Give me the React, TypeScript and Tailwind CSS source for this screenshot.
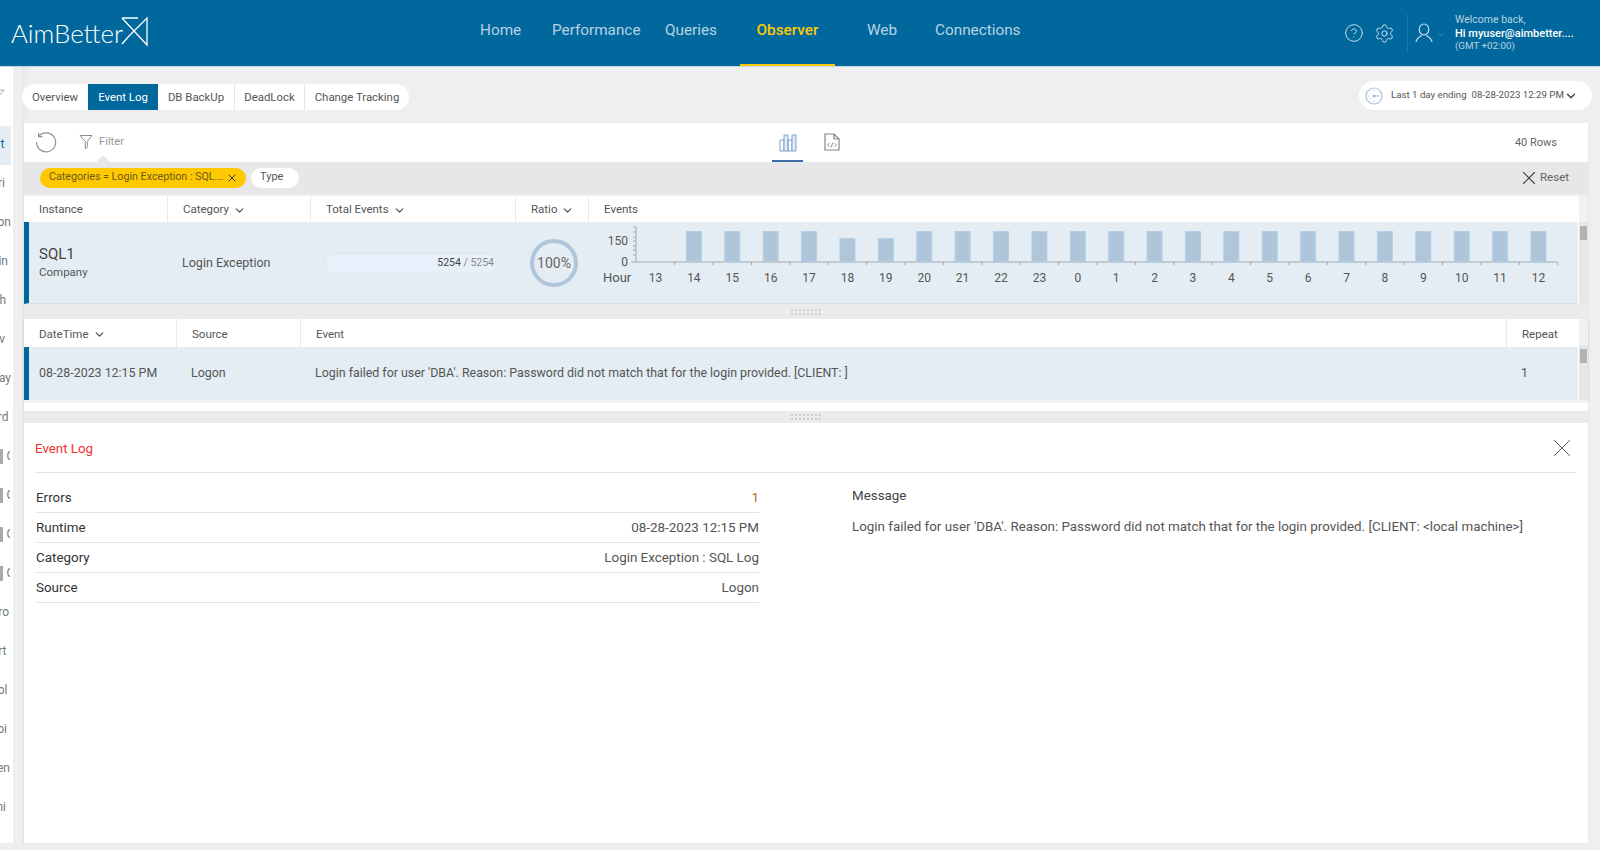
import React from "react";
import { ChevronDown, X, CircleHelp, Settings } from "lucide-react";

const navItems = [
  { label: "Home", cls: "ml-[480px] w-[41px]" },
  { label: "Performance", cls: "ml-[31px] w-[88px]" },
  { label: "Queries", cls: "ml-[25px] w-[52px]" },
];

const sideLabels = [
  { t: "t", c: "pr-[6.6px] bg-[#e4edf3] text-[#01689d]" },
  { t: "ri", c: "pr-[6px]" },
  { t: "on", c: "pr-0" },
  { t: "in", c: "pr-[3px]" },
  { t: "th", c: "pr-[5px]" },
  { t: "v", c: "pr-[6px]" },
  { t: "ay", c: "pr-0" },
  { t: "rd", c: "pr-[2.5px]" },
];
const sideLabels2 = [
  { t: "ro", c: "pr-[2px]" },
  { t: "rt", c: "pr-[4.5px]" },
  { t: "ol", c: "pr-[3.5px]" },
  { t: "oi", c: "pr-[4px]" },
  { t: "en", c: "pr-[1px]" },
  { t: "ni", c: "pr-[5px]" },
];
const hours = [13, 14, 15, 16, 17, 18, 19, 20, 21, 22, 23, 0, 1, 2, 3, 4, 5, 6, 7, 8, 9, 10, 11, 12];

function Logo() {
  return (
    <div className="flex items-center ml-[11px] w-[137px] absolute left-0 top-0 h-[66px]">
      <span className="text-[25.8px] leading-none font-light text-white font-['Lato',sans-serif] pt-[1px]">AimBetter</span>
      <svg width="30" height="32" viewBox="0 0 30 32" className="absolute left-[110px] top-[15px]" fill="none" stroke="#ffffff" strokeWidth="1.3">
        <path d="M1 3H17M1 3L26 30V3L8 21L1 29" />
      </svg>
    </div>
  );
}

function HeadCell({ label, w, sort, pt = "pt-[2px]", last }: { label: string; w: string; sort?: boolean; pt?: string; last?: boolean }) {
  return (
    <div className={`${w} pl-[15px] ${pt} ${last ? "" : "border-r border-[#e9e9e9]"} h-full flex items-center gap-[4px] text-[11.5px] text-[#555555] shrink-0`}>
      <span>{label}</span>
      {sort && <ChevronDown size={13} strokeWidth={2.4} className="text-[#555555]" />}
    </div>
  );
}

function Track() {
  return (
    <div className="w-[10px] shrink-0 bg-[#e7e7e7] border-l border-white self-stretch">
      <div className="h-[26px] bg-[#f1f1f1]" />
      <div className="h-[14px] mt-[4px] mx-[1px] bg-[#b2b2b2]" />
    </div>
  );
}

function Grip() {
  return (
    <svg width="32" height="6" viewBox="0 0 32 6" fill="#cdcdcd">
      {[0, 4, 8, 12, 16, 20, 24, 28].map((x) => (
        <g key={x}>
          <rect x={x + 1} y="0" width="2" height="2" />
          <rect x={x + 1} y="4" width="2" height="2" />
        </g>
      ))}
    </svg>
  );
}

function Chart() {
  const cx = (i: number) => 67.5 + 38.39 * i;
  return (
    <svg width="990" height="82" viewBox="0 0 990 82" fontFamily="Roboto, sans-serif">
      <path d="M48 5V40H969" fill="none" stroke="#a3a8ac" strokeWidth="1" />
      {[5, 10, 15, 19, 24, 28, 33].map((y) => (
        <path key={y} d={`M45 ${y}H48`} stroke="#a3a8ac" strokeWidth="1" />
      ))}
      <path d="M43 40H48" stroke="#a3a8ac" strokeWidth="1" />
      {hours.map((h, i) => {
        if (i === 0) return null;
        const top = h === 18 || h === 19 ? 16 : 9;
        return (
          <rect
            key={h}
            x={cx(i) - 7.5}
            y={top + 0.5}
            width="15"
            height={40 - top - 0.5}
            fill="#afc5da"
            stroke={h === 16 ? "#c9ccc6" : "#b4cfe8"}
          />
        );
      })}
      {hours.map((h, i) => (
        <path key={`t${h}`} d={`M${cx(i) + 19.2} 40V43`} stroke="#a3a8ac" strokeWidth="1" />
      ))}
      <text x="40" y="23" textAnchor="end" fontSize="12" fill="#555555">150</text>
      <text x="40" y="44" textAnchor="end" fontSize="12" fill="#555555">0</text>
      <text x="15" y="60" fontSize="13" fill="#555555">Hour</text>
      {hours.map((h, i) => (
        <text key={`l${h}`} x={cx(i)} y="60" textAnchor="middle" fontSize="12" fill="#555555">{h}</text>
      ))}
    </svg>
  );
}

function DetailRow({ k, v, vc = "text-[#555555]" }: { k: string; v: string; vc?: string }) {
  return (
    <div className="h-[30px] flex items-center justify-between border-b border-[#e2e2e2] text-[13.4px] pt-[2px]">
      <span className="text-[#333333]">{k}</span>
      <span className={vc}>{v}</span>
    </div>
  );
}

export default function App() {
  return (
    <div className="w-[1600px] h-[850px] overflow-hidden bg-[#efefef] flex flex-col font-['Roboto',sans-serif]">
      <header className="relative h-[67px] shrink-0 bg-[#01689d] border-b border-[#c6d8e3] flex items-stretch">
        <Logo />
        {navItems.map((n) => (
          <div key={n.label} className={`${n.cls} flex items-center pb-[6px] text-[15.3px] text-[#b7d2e2] whitespace-nowrap`}>{n.label}</div>
        ))}
        <div className="ml-[23px] w-[95px] flex items-center justify-center pb-[4px] text-[15.3px] font-medium text-[#ffc800] border-b-2 border-[#ffc800]">Observer</div>
        <div className="ml-[32px] w-[30px] flex items-center pb-[6px] text-[15.3px] text-[#b7d2e2]">Web</div>
        <div className="ml-[38px] w-[85px] flex items-center pb-[6px] text-[15.3px] text-[#b7d2e2] whitespace-nowrap">Connections</div>
        <div className="ml-[324px] flex items-center text-[#d6e4ee]">
          <CircleHelp size={20} strokeWidth={1.1} />
          <Settings size={21} strokeWidth={1.1} className="ml-[10px]" />
          <div className="w-px h-[38px] bg-[#1a77a6] ml-[12px]" />
          <svg width="18" height="20" viewBox="0 0 18 20" fill="none" stroke="#d6e4ee" strokeWidth="1.1" className="ml-[7px]">
            <ellipse cx="9" cy="6.5" rx="4.8" ry="5.5" />
            <path d="M1 19C1.5 15 5 13.5 6.5 12.5M17 19C16.5 15 13 13.5 11.5 12.5" />
          </svg>
          <ChevronDown size={8} strokeWidth={1.5} className="ml-[4px] mt-[4px] text-[#7fb0cb]" />
          <div className="ml-[10px] pb-[2px] flex flex-col whitespace-nowrap">
            <span className="text-[10.5px] leading-[14px] text-[#b7d2e2]">Welcome back,</span>
            <span className="text-[11px] leading-[14px] font-medium text-white">Hi myuser@aimbetter....</span>
            <span className="text-[9.8px] leading-[10px] text-[#b7d2e2]">(GMT +02:00)</span>
          </div>
        </div>
      </header>

      <div className="flex h-[776px] shrink-0">
        <aside className="w-[13px] shrink-0 bg-white overflow-hidden text-xs text-[#777777] relative">
          <div className="h-[59px] flex items-start justify-start pt-[21px]">
            <svg width="14" height="14" viewBox="0 0 14 14" fill="none" stroke="#aaaaaa" strokeWidth="1" className="-ml-[9px] shrink-0">
              <path d="M1 2H13L8.5 7.5V12L6 13V7.5Z" />
            </svg>
          </div>
          {sideLabels.map((s) => (
            <div key={s.t} className={`h-[39px] flex items-center justify-end pb-[4px] w-[11px] overflow-hidden whitespace-nowrap ${s.c}`}>{s.t}</div>
          ))}
          {[0, 1, 2, 3].map((i) => (
            <div key={i} className="h-[39px] w-[13px] flex items-center gap-[3.5px] pb-[4px] -ml-[3px] overflow-hidden">
              <span className="w-[6px] h-[15px] shrink-0 bg-[#a9a9a9] mt-[1px]" />
              <span>C</span>
            </div>
          ))}
          {sideLabels2.map((s) => (
            <div key={s.t} className={`h-[39px] flex items-center justify-end pb-[4px] w-[11px] overflow-hidden whitespace-nowrap ${s.c}`}>{s.t}</div>
          ))}
        </aside>

        <main className="flex-1 min-w-0 ml-[9px] flex flex-col bg-[#efefef] shadow-[inset_8px_0_8px_-8px_rgba(0,0,0,0.06)]">
          <div className="h-[56px] shrink-0 flex justify-between items-start pt-[17px]">
            <div className="flex h-[26px] bg-white rounded-full overflow-hidden pt-0 text-[11.4px] text-[#555555]">
              <div className="w-[66px] flex items-center justify-center pt-[1px]">Overview</div>
              <div className="w-[70px] flex items-center justify-center pt-[1px] bg-[#01689d] text-white">Event Log</div>
              <div className="w-[77px] flex items-center justify-center pt-[1px] border-r border-[#e6e6e6]">DB BackUp</div>
              <div className="w-[70px] flex items-center justify-center pt-[1px] border-r border-[#e6e6e6]">DeadLock</div>
              <div className="w-[104px] flex items-center justify-center pt-[1px]">Change Tracking</div>
            </div>
            <div className="mr-[8px] -mt-[3px] w-[233px] h-[29px] bg-white rounded-full flex items-center pl-[6px] text-[9.7px] text-[#555555] whitespace-nowrap">
              <svg width="18" height="18" viewBox="0 0 18 18" fill="none" stroke="#a8bfdc" strokeWidth="1.2">
                <circle cx="9" cy="9" r="8" />
                <path d="M9 9H15M3 9H4M9 3V4M9 14V15" />
                <circle cx="9" cy="9" r="1" fill="#7d9cc4" />
              </svg>
              <span className="ml-[8px] w-[170px]">Last 1 day ending&nbsp; 08-28-2023 12:29 PM</span>
              <ChevronDown size={14} strokeWidth={2.4} className="ml-[3px] text-[#444444]" />
            </div>
          </div>

          <section className="ml-[2px] w-[1564px] flex-1 min-h-0 flex flex-col shadow-[0_0_3px_rgba(0,0,0,0.06)]">
            <div className="relative h-[39px] shrink-0 bg-white flex items-center">
              <svg width="22" height="22" viewBox="0 0 22 22" fill="none" stroke="#8f8f8f" strokeWidth="1.2" className="ml-[11px]">
                <path d="M3.6 4.5A9.5 9.5 0 1 1 1.6 10M3.6 1V4.7H7.3" />
              </svg>
              <svg width="14" height="16" viewBox="0 0 14 16" fill="none" stroke="#8f8f8f" strokeWidth="1" className="ml-[22px] -mt-[1px]">
                <path d="M1 1.5H13L8.3 7.5V13L6.3 15V7.5Z" />
              </svg>
              <span className="ml-[6px] pb-[1px] text-[11.2px] text-[#999999]">Filter</span>
              <svg width="20" height="20" viewBox="0 0 20 20" fill="#e3ebf4" stroke="#7aa3d0" strokeWidth="1" className="absolute left-[754px] top-[10px]">
                <path d="M2 7H6V18H2Z" fill="none" />
                <path d="M6 2H10V18H6Z" />
                <path d="M10 7H14V18H10Z" fill="none" />
                <path d="M14 2H18V18H14Z" />
              </svg>
              <div className="absolute left-[748px] bottom-0 w-[31px] h-[2px] bg-[#3f6fa8]" />
              <svg width="16" height="18" viewBox="0 0 16 18" fill="none" stroke="#858585" strokeWidth="1.2" className="absolute left-[800px] top-[10px]">
                <path d="M1 1H10L15 6V17H1ZM10 1V6H15" />
                <path d="M5.5 10L3.5 12L5.5 14M10.5 10L12.5 12L10.5 14M9 9.5L7 14.5" strokeWidth="0.9" />
              </svg>
              <span className="absolute right-[31px] top-[12px] text-[11px] text-[#666666]">40 Rows</span>
              <div className="absolute left-[72px] bottom-0 w-0 h-0 border-x-[7px] border-x-transparent border-b-[7px] border-b-[#e7e7e7]" />
            </div>

            <div className="h-[32px] shrink-0 bg-[#e7e7e7] flex items-center pl-[16px]">
              <div className="w-[206px] h-[20px] -mt-[1px] rounded-full bg-[#ffc800] flex items-center pl-[9px] text-[10.7px] text-[#6b5a1a] whitespace-nowrap">
                <span className="w-[174px]">Categories = Login Exception : SQL...</span>
                <X size={12} strokeWidth={2} className="ml-[3px] text-[#333333]" />
              </div>
              <div className="ml-[5px] w-[48px] h-[20px] -mt-[1px] rounded-full bg-white flex items-center pl-[9px] text-[11px] text-[#555555]">Type</div>
              <div className="ml-auto mr-[19px] flex items-center text-[11.5px] text-[#666666]">
                <X size={22} strokeWidth={1.2} className="text-[#444444]" />
                <span>Reset</span>
              </div>
            </div>

            <div className="h-[2px] shrink-0 bg-[#ededed]" />
            <div className="flex h-[108px] shrink-0">
              <div className="flex-1 min-w-0 flex flex-col">
                <div className="h-[26px] shrink-0 bg-white flex items-center">
                  <HeadCell label="Instance" w="w-[144px]" />
                  <HeadCell label="Category" w="w-[143px]" sort />
                  <HeadCell label="Total Events" w="w-[205px]" sort />
                  <HeadCell label="Ratio" w="w-[73px]" sort />
                  <HeadCell label="Events" w="flex-1" last />
                </div>
                <div className="h-[82px] bg-[#e4edf3] border-l-[5px] border-[#01689d] flex items-stretch border-b border-b-[#dcdfe1]">
                  <div className="w-[138px] shrink-0 pl-[10px] pb-[2px] flex flex-col justify-center">
                    <span className="text-[15px] leading-[20px] text-[#444444]">SQL1</span>
                    <span className="text-[11.5px] leading-[16px] text-[#555555]">Company</span>
                  </div>
                  <div className="w-[143px] shrink-0 pl-[15px] pt-[1px] flex items-center text-[12.5px] text-[#555555]">Login Exception</div>
                  <div className="w-[204px] shrink-0 pl-[14px] flex items-center">
                    <div className="w-[174px] h-[20px] rounded-full bg-[#e8f0fb] border border-[#e0e8f0] flex items-center justify-end pr-[3px] text-[10.5px]">
                      <span className="text-[#444444]">5254</span>
                      <span className="text-[#8a8a8a]">&nbsp;/ 5254</span>
                    </div>
                  </div>
                  <div className="w-[74px] shrink-0 flex items-center pl-[16px]">
                    <div className="w-[48px] h-[48px] shrink-0 rounded-full border-[4px] border-[#b0c5da] flex items-center justify-center text-sm text-[#666666]">100%</div>
                  </div>
                  <div className="flex-1 min-w-0"><Chart /></div>
                </div>
              </div>
              <Track />
            </div>

            <div className="h-[15px] shrink-0 bg-[#ebebeb] flex items-center justify-center"><Grip /></div>

            <div className="flex h-[81px] shrink-0 shadow-[0_2px_2px_rgba(0,0,0,0.18)]">
              <div className="flex-1 min-w-0 flex flex-col">
                <div className="h-[28px] shrink-0 bg-white flex items-center">
                  <HeadCell label="DateTime" w="w-[153px]" sort pt="pt-[3px]" />
                  <HeadCell label="Source" w="w-[124px]" pt="pt-[3px]" />
                  <HeadCell label="Event" w="w-[1206px]" pt="pt-[3px]" />
                  <HeadCell label="Repeat" w="flex-1" pt="pt-[3px]" last />
                </div>
                <div className="h-[53px] bg-[#e4edf3] border-l-[5px] border-[#01689d] flex items-center text-[12.4px] text-[#555555] whitespace-nowrap">
                  <div className="w-[148px] shrink-0 pl-[10px]">08-28-2023 12:15 PM</div>
                  <div className="w-[124px] shrink-0 pl-[14px]">Logon</div>
                  <div className="w-[1206px] shrink-0 pl-[14px]">Login failed for user 'DBA'. Reason: Password did not match that for the login provided. [CLIENT: ]</div>
                  <div className="flex-1 pl-[14px]">1</div>
                </div>
              </div>
              <Track />
            </div>

            <div className="h-[3px] shrink-0 bg-[#f2f2f2]" />
            <div className="h-[8px] shrink-0 bg-white" />
            <div className="h-[12px] shrink-0 bg-[#ebebeb] flex items-center justify-center"><Grip /></div>

            <div className="h-[420px] shrink-0 bg-white pl-[11px] pr-[12px] flex flex-col">
              <div className="h-[50px] shrink-0 border-b border-[#e2e2e2] flex items-center justify-between">
                <span className="text-[13.3px] pt-[2px] text-[#f0322a]">Event Log</span>
                <X size={30} strokeWidth={0.8} className="text-[#555555] -mr-[1px]" />
              </div>
              <div className="flex pt-[10px]">
                <div className="w-[723px] shrink-0 ml-[1px]">
                  <DetailRow k="Errors" v="1" vc="text-[#b06a1e]" />
                  <DetailRow k="Runtime" v="08-28-2023 12:15 PM" />
                  <DetailRow k="Category" v="Login Exception : SQL Log" />
                  <DetailRow k="Source" v="Logon" />
                </div>
                <div className="ml-[93px] flex flex-col pt-[3px]">
                  <span className="text-[13.36px] leading-[20px] text-[#444444]">Message</span>
                  <span className="mt-[11px] text-[13.36px] leading-[20px] text-[#555555] whitespace-nowrap">Login failed for user 'DBA'. Reason: Password did not match that for the login provided. [CLIENT: &lt;local machine&gt;]</span>
                </div>
              </div>
            </div>
          </section>
        </main>
      </div>
    </div>
  );
}
